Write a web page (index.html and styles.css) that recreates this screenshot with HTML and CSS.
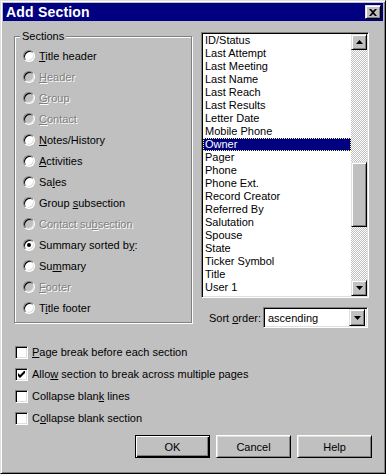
FILE: index.html
```html
<!DOCTYPE html>
<html lang="en">
<head>
  <meta charset="UTF-8" />
  <title>Add Section</title>
  <link rel="stylesheet" href="styles.css">
</head>
<body>

<div class="window">
  <div class="titlebar">
    <span class="title">Add Section</span>
    <span class="close-btn">
      <svg width="8" height="7" viewBox="0 0 8 7"><path d="M0 0h2l2 2 2-2h2L5 3.5 8 7H6L4 5 2 7H0l3-3.5z" fill="#000"/></svg>
    </span>
  </div>

  <div class="content">
    <div class="top">
      <fieldset class="sections">
        <legend>Sections</legend>
        <div class="radio-row"><span class="radio"></span><span><u>T</u>itle header</span></div>
        <div class="radio-row disabled"><span class="radio"></span><span><u>H</u>eader</span></div>
        <div class="radio-row disabled"><span class="radio"></span><span><u>G</u>roup</span></div>
        <div class="radio-row disabled"><span class="radio"></span><span><u>C</u>ontact</span></div>
        <div class="radio-row"><span class="radio"></span><span><u>N</u>otes/History</span></div>
        <div class="radio-row"><span class="radio"></span><span><u>A</u>ctivities</span></div>
        <div class="radio-row"><span class="radio"></span><span>Sa<u>l</u>es</span></div>
        <div class="radio-row"><span class="radio"></span><span>Group <u>s</u>ubsection</span></div>
        <div class="radio-row disabled"><span class="radio"></span><span>Contact su<u>b</u>section</span></div>
        <div class="radio-row"><span class="radio checked"></span><span>Summary sorted b<u>y</u>:</span></div>
        <div class="radio-row"><span class="radio"></span><span>Su<u>m</u>mary</span></div>
        <div class="radio-row disabled"><span class="radio"></span><span><u>F</u>ooter</span></div>
        <div class="radio-row"><span class="radio"></span><span>T<u>i</u>tle footer</span></div>
      </fieldset>

      <div class="side">
        <div class="listbox">
          <div class="items">
            <div class="item">ID/Status</div>
            <div class="item">Last Attempt</div>
            <div class="item">Last Meeting</div>
            <div class="item">Last Name</div>
            <div class="item">Last Reach</div>
            <div class="item">Last Results</div>
            <div class="item">Letter Date</div>
            <div class="item">Mobile Phone</div>
            <div class="item selected">Owner</div>
            <div class="item">Pager</div>
            <div class="item">Phone</div>
            <div class="item">Phone Ext.</div>
            <div class="item">Record Creator</div>
            <div class="item">Referred By</div>
            <div class="item">Salutation</div>
            <div class="item">Spouse</div>
            <div class="item">State</div>
            <div class="item">Ticker Symbol</div>
            <div class="item">Title</div>
            <div class="item">User 1</div>
            <div class="item">User 10</div>
          </div>
          <div class="scrollbar">
            <span class="sb-btn">
              <svg width="7" height="4" viewBox="0 0 7 4"><path d="M3.5 0L7 4H0z" fill="#000"/></svg>
            </span>
            <div class="track"><div class="thumb"></div></div>
            <span class="sb-btn">
              <svg width="7" height="4" viewBox="0 0 7 4"><path d="M0 0h7L3.5 4z" fill="#000"/></svg>
            </span>
          </div>
        </div>

        <div class="sort-row">
          <span class="sort-label">Sort <u>o</u>rder:</span>
          <div class="combo">
            <span class="combo-text">ascending</span>
            <span class="sb-btn combo-btn">
              <svg width="7" height="4" viewBox="0 0 7 4"><path d="M0 0h7L3.5 4z" fill="#000"/></svg>
            </span>
          </div>
        </div>
      </div>
    </div>

    <div class="checks">
      <div class="check-row"><span class="checkbox"></span><span><u>P</u>age break before each section</span></div>
      <div class="check-row">
        <span class="checkbox">
          <svg width="7" height="7" viewBox="0 0 7 7"><path d="M0 2v3l2 2 5-5V-1L2 4z" fill="#000"/></svg>
        </span>
        <span>Allo<u>w</u> section to break across multiple pages</span>
      </div>
      <div class="check-row"><span class="checkbox"></span><span>Collapse blan<u>k</u> lines</span></div>
      <div class="check-row"><span class="checkbox"></span><span>C<u>o</u>llapse blank section</span></div>
    </div>

    <div class="buttons">
      <button class="btn default">OK</button>
      <button class="btn">Cancel</button>
      <button class="btn">Help</button>
    </div>
  </div>
</div>

</body>
</html>
```

FILE: styles.css
```css
* {
  box-sizing: border-box;
}

html, body {
  margin: 0;
}

body {
  background: #c0c0c0;
  font-family: "Liberation Sans", Arial, sans-serif;
  font-size: 11px;
  color: #000;
}

u {
  text-underline-offset: 1px;
}

.window {
  width: 386px;
  height: 474px;
  border: 1px solid;
  border-color: #dfdfdf #000 #000 #dfdfdf;
  box-shadow: inset 1px 1px #fff, inset -1px -1px #808080;
  padding: 2px;
  background: #c0c0c0;
}

.titlebar {
  height: 18px;
  background: #000080;
  display: flex;
  align-items: center;
  justify-content: space-between;
  padding: 0 2px 0 3px;
}

.title {
  color: #fff;
  font-weight: bold;
  font-size: 14px;
  letter-spacing: 0.2px;
}

.close-btn,
.sb-btn {
  display: flex;
  align-items: center;
  justify-content: center;
  background: #c0c0c0;
  border: 1px solid;
  border-color: #dfdfdf #000 #000 #dfdfdf;
  box-shadow: inset 1px 1px #fff, inset -1px -1px #808080;
}

.close-btn {
  width: 16px;
  height: 14px;
}

.content {
  padding: 9px 11px 0 11px;
}

.top {
  display: flex;
  align-items: flex-start;
}

/* group box */
.sections {
  width: 178px;
  margin: 0;
  padding: 2px 0 4px 8px;
  border: 1px solid #808080;
  box-shadow: 1px 1px 0 #fff, inset 1px 1px 0 #fff;
}

.sections legend {
  padding: 0 2px;
  margin-left: -3px;
  line-height: 13px;
  background: #c0c0c0;
}

.radio-row {
  display: flex;
  align-items: center;
  height: 21px;
  gap: 4px;
}

.radio {
  width: 12px;
  height: 12px;
  border-radius: 50%;
  border: 1px solid;
  border-color: #808080 #fff #fff #808080;
  box-shadow: inset 1px 1px #000, inset -1px -1px #dfdfdf;
  background: #fff;
  display: flex;
  align-items: center;
  justify-content: center;
}

.radio.checked::after {
  content: "";
  width: 4px;
  height: 4px;
  border-radius: 50%;
  background: #000;
}

.radio-row.disabled {
  color: #808080;
  text-shadow: 1px 1px 0 #fff;
}

.radio-row.disabled .radio {
  background: #c0c0c0;
}

/* list */
.side {
  width: 168px;
  margin-left: 9px;
  margin-top: 2px;
}

.listbox,
.combo,
.checkbox {
  border: 1px solid;
  border-color: #808080 #fff #fff #808080;
  box-shadow: inset 1px 1px #000, inset -1px -1px #dfdfdf;
  background: #fff;
}

.listbox {
  height: 266px;
  display: flex;
  padding: 1px;
}

.items {
  flex: 1;
  overflow: hidden;
}

.item {
  height: 13px;
  line-height: 13px;
  padding-left: 2px;
  white-space: nowrap;
}

.item.selected {
  background: #000080;
  color: #fff;
  outline: 1px dotted #ffff80;
  outline-offset: -1px;
}

.scrollbar {
  width: 16px;
  display: flex;
  flex-direction: column;
}

.scrollbar .sb-btn {
  height: 16px;
}

.track {
  flex: 1;
  background-image: conic-gradient(#fff 25%, #c0c0c0 0 50%, #fff 0 75%, #c0c0c0 0);
  background-size: 2px 2px;
  padding-top: 112px;
}

.thumb {
  height: 65px;
  background: #c0c0c0;
  border: 1px solid;
  border-color: #dfdfdf #000 #000 #dfdfdf;
  box-shadow: inset 1px 1px #fff, inset -1px -1px #808080;
}

.sort-row {
  display: flex;
  align-items: center;
  margin-top: 9px;
}

.sort-label {
  margin-left: 8px;
}

.combo {
  margin-left: auto;
  margin-right: 1px;
  width: 105px;
  height: 21px;
  display: flex;
  align-items: center;
  padding: 2px;
}

.combo-text {
  flex: 1;
  padding-left: 2px;
}

.combo-btn {
  width: 16px;
  height: 17px;
}

/* checkboxes */
.checks {
  margin-top: 13px;
}

.check-row {
  display: flex;
  align-items: center;
  height: 22px;
  gap: 4px;
}

.checkbox {
  width: 13px;
  height: 13px;
  margin-left: 1px;
  display: flex;
  align-items: center;
  justify-content: center;
}

.buttons {
  display: flex;
  justify-content: flex-end;
  gap: 6px;
  margin-top: 6px;
}

.btn {
  width: 75px;
  height: 23px;
  padding: 0;
  font-family: inherit;
  font-size: 11px;
  color: #000;
  background: #c0c0c0;
  border: 1px solid;
  border-color: #fff #000 #000 #fff;
  box-shadow: inset 1px 1px #dfdfdf, inset -1px -1px #808080;
}

.btn.default {
  border-color: #000;
  box-shadow: inset 1px 1px #fff, inset -1px -1px #000, inset -2px -2px #808080;
}
```
